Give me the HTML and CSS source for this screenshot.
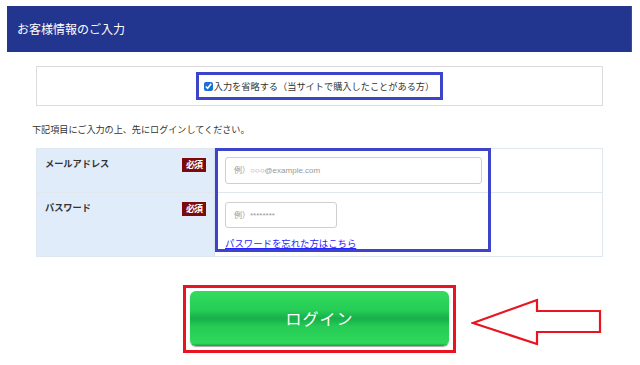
FILE: index.html
```html
<!DOCTYPE html>
<html lang="ja">
<head>
<meta charset="utf-8">
<link rel="stylesheet" href="styles.css">
</head>
<body>
<div class="page">
  <header class="head">お客様情報のご入力</header>
  <div class="content">
    <div class="skip-box">
      <label class="skip"><input type="checkbox" checked class="chk">入力を省略する（当サイトで購入したことがある方）</label>
    </div>
    <p class="note">下記項目にご入力の上、先にログインしてください。</p>
    <div class="form">
      <div class="row row1">
        <div class="lab"><span>メールアドレス</span><span class="req">必須</span></div>
        <div class="val"><div class="inp inp-mail">例）○○○@example.com</div></div>
      </div>
      <div class="row row2">
        <div class="lab"><span>パスワード</span><span class="req">必須</span></div>
        <div class="val">
          <div class="inp inp-pass">例）********</div>
          <a class="forgot" href="#">パスワードを忘れた方はこちら</a>
        </div>
      </div>
      <div class="hl"></div>
    </div>
    <div class="btn-wrap">
      <div class="btn-frame"><button class="btn">ログイン</button></div>
      <svg class="arrow" width="140" height="60" viewBox="0 0 140 60">
        <polygon points="2,28 66,5 66,16 129,16 129,37 66,37 66,49" fill="#fff" stroke="#e8141f" stroke-width="2.2"/>
      </svg>
    </div>
  </div>
</div>
</body>
</html>
```
FILE: styles.css
```css
* { box-sizing: border-box; }
html, body { margin: 0; padding: 0; background: #fff; }
body { font-family: "Noto Sans CJK JP", "Noto Sans", sans-serif; color: #333; width: 640px; height: 365px; overflow: hidden; }
.page { padding-top: 6px; }
.head {
  margin-left: 7px; width: 625px; height: 46px;
  background: #22358f; color: #fff;
  font-size: 12px; line-height: 46px; padding-left: 10px;
  border-right: 1px solid #3a4ca0;
}
.content { margin-left: 32px; width: 571px; }
.skip-box {
  margin-top: 14px; margin-left: 4px; height: 40px;
  border: 1px solid #dcdcdc;
  display: flex; align-items: center; justify-content: center;
}
.skip {
  display: flex; align-items: center;
  height: 28px; border: 3px solid #3c44c9;
  padding: 0 6px 0 5px; font-size: 9.2px; color: #333; margin-left: 0;
}
.chk { width: 9px; height: 9px; margin: 0 1px 0 0; accent-color: #1a6fd6; }
.note { margin: 17px 0 0; font-size: 9.1px; line-height: 12px; color: #333; }
.form {
  position: relative; margin: 13px 0 0 4px; width: 567px;
  border: 1px solid #e1e7ef;
}
.row { display: flex; }
.row1 { height: 44px; border-bottom: 1px solid #e1e7ef; }
.row2 { height: 63px; }
.lab {
  width: 178px; background: #e1ecfb; border-right: 1px solid #d6e0ee;
  display: flex; justify-content: space-between; align-items: flex-start;
  padding: 8px 8px 0 8px; font-size: 9.2px; font-weight: bold; color: #333;
}
.lab span:first-child { line-height: 12px; margin-top: 0; }
.req {
  background: #7d0a0a; color: #fff; font-size: 9px; font-weight: bold;
  width: 24px; height: 14px; line-height: 14px; text-align: center; margin-top: 1px;
  font-family: "DejaVu Serif", "Noto Sans CJK JP", serif; letter-spacing: -1px;
}
.val { flex: 1; padding: 8px 0 0 10px; }
.inp {
  border: 1px solid #cfcfcf; border-radius: 3px; height: 27px;
  font-size: 8px; color: #999; line-height: 25px; padding-left: 8px;
  font-family: "Liberation Sans", "Noto Sans CJK JP", sans-serif;
}
.inp-mail { width: 257px; }
.inp-pass { width: 112px; height: 26px; margin-top: 1px; }
.forgot {
  display: inline-block; margin-top: 3px; font-size: 9.4px; line-height: 12px;
  color: #2424ff; text-decoration: underline;
}
.hl {
  position: absolute; left: 178px; top: -1px; width: 276px; height: 104px;
  border: 3px solid #3c44c9;
}
.btn-wrap { position: relative; margin-top: 28px; display: flex; }
.btn-frame {
  margin-left: 151px; width: 273px; height: 68px;
  border: 3px solid #e8141f; padding: 3px 4px 4px 4px;
}
.btn {
  display: block; width: 259px; height: 55px; border: 0; border-radius: 6px;
  background: linear-gradient(#33dc5e 0%, #26cc55 35%, #17b04a 50%, #26cc55 65%, #2fd85c 95%, #1f9a45 100%);
  box-shadow: 0 1px 1px rgba(0,0,0,0.35);
  color: #fff; font-size: 16px; font-family: "Noto Sans CJK JP", sans-serif;
  letter-spacing: 1px; padding: 0 0 2px;
}
.arrow { position: absolute; left: 439px; top: 10px; }
```
